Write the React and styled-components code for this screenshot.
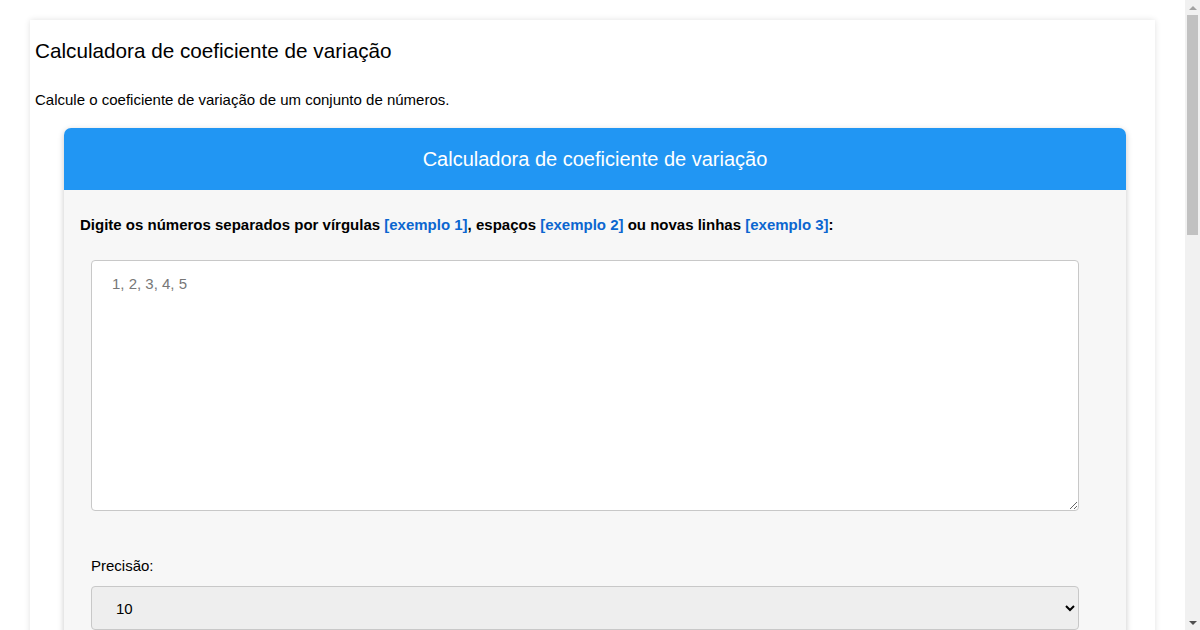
import React from "react";
import styled, { createGlobalStyle } from "styled-components";

const GlobalStyle = createGlobalStyle`
  html, body {
    margin: 0;
    padding: 0;
    background: #fff;
    font-family: "Liberation Sans", Arial, sans-serif;
    color: #000;
    overflow: hidden;
  }
`;

const Frame = styled.div`
  display: flex;
  height: 100vh;
`;

const Page = styled.div`
  flex: 1;
  min-width: 0;
  overflow: hidden;
  padding: 20px 30px 40px 30px;
`;

const ScrollBar = styled.div`
  width: 15px;
  flex-shrink: 0;
  background: #f1f1f1;
  display: flex;
  flex-direction: column;
  align-items: center;
`;

const Arrow = styled.div`
  height: 15px;
  width: 15px;
  display: flex;
  align-items: center;
  justify-content: center;
  &::before {
    content: "";
    width: 0;
    height: 0;
    border-left: 4px solid transparent;
    border-right: 4px solid transparent;
    ${({ $down }) =>
      $down ? "border-top: 4px solid #505050;" : "border-bottom: 4px solid #a3a3a3;"}
  }
`;

const Thumb = styled.div`
  width: 11px;
  height: 220px;
  background: #c1c1c1;
`;

const Track = styled.div`
  flex: 1;
`;

const Container = styled.div`
  background: #fff;
  box-shadow: 0 0 6px rgba(0, 0, 0, 0.12);
  padding: 17px 29px 40px 5px;
  min-height: 1600px;
`;

const Title = styled.h1`
  font-size: 20.7px;
  font-weight: normal;
  margin: 0 0 25px 0;
  line-height: 28px;
`;

const Lead = styled.p`
  font-size: 15px;
  margin: 0 0 18px 0;
  line-height: 20px;
`;

const Calculator = styled.div`
  margin-left: 29px;
  border-radius: 7px;
  overflow: hidden;
  background: #f7f7f7;
  box-shadow: 0 2px 6px rgba(0, 0, 0, 0.22);
`;

const Header = styled.div`
  background: #2196f3;
  color: #fff;
  height: 62px;
  display: flex;
  align-items: center;
  justify-content: center;
  font-size: 20px;
`;

const Body = styled.div`
  padding: 25px 16px 40px 16px;
`;

const Prompt = styled.p`
  font-size: 15px;
  font-weight: bold;
  margin: 0 0 25px 0;
  line-height: 20px;
`;

const Example = styled.a`
  color: #0b66d0;
  text-decoration: none;
  cursor: pointer;
`;

const Field = styled.div`
  margin-left: 11px;
  width: 988px;
`;

const Numbers = styled.textarea`
  display: block;
  box-sizing: border-box;
  width: 100%;
  height: 251px;
  padding: 13px 20px;
  border: 1px solid #c8c8c8;
  border-radius: 4px;
  background: #fff;
  font-family: "Liberation Sans", Arial, sans-serif;
  font-size: 15px;
  line-height: 20px;
  margin: 0 0 45px 0;
  &::placeholder {
    color: #777;
  }
`;

const Label = styled.label`
  display: block;
  font-size: 15px;
  line-height: 20px;
  margin-bottom: 10px;
`;

const Select = styled.select`
  display: block;
  box-sizing: border-box;
  width: 100%;
  height: 44px;
  padding: 0 20px;
  border: 1px solid #c8c8c8;
  border-radius: 4px;
  background: #eee;
  font-family: "Liberation Sans", Arial, sans-serif;
  font-size: 15px;
  color: #000;
  margin-bottom: 30px;
`;

const Button = styled.button`
  display: block;
  width: 100%;
  height: 48px;
  border: none;
  border-radius: 4px;
  background: #2196f3;
  color: #fff;
  font-size: 17px;
  font-family: "Liberation Sans", Arial, sans-serif;
`;

export default function App() {
  return (
    <>
      <GlobalStyle />
      <Frame>
        <Page>
          <Container>
            <Title>Calculadora de coeficiente de variação</Title>
            <Lead>Calcule o coeficiente de variação de um conjunto de números.</Lead>
            <Calculator>
              <Header>Calculadora de coeficiente de variação</Header>
              <Body>
                <Prompt>
                  Digite os números separados por vírgulas <Example>[exemplo 1]</Example>, espaços{" "}
                  <Example>[exemplo 2]</Example> ou novas linhas <Example>[exemplo 3]</Example>:
                </Prompt>
                <Field>
                  <Numbers placeholder="1, 2, 3, 4, 5" />
                  <Label htmlFor="precision">Precisão:</Label>
                  <Select id="precision" defaultValue="10">
                    {[2, 4, 6, 8, 10, 12, 14].map((n) => (
                      <option key={n} value={n}>
                        {n}
                      </option>
                    ))}
                  </Select>
                  <Button>Calcular</Button>
                </Field>
              </Body>
            </Calculator>
          </Container>
        </Page>
        <ScrollBar>
          <Arrow />
          <Thumb />
          <Track />
          <Arrow $down />
        </ScrollBar>
      </Frame>
    </>
  );
}
